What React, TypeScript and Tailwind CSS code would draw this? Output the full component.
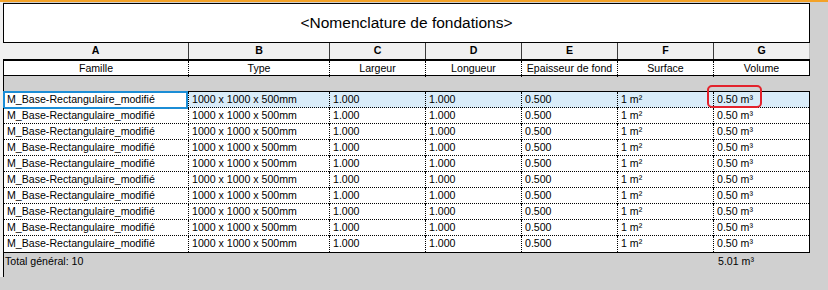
import React from 'react'

const letters = ['A', 'B', 'C', 'D', 'E', 'F', 'G']
const headers = ['Famille', 'Type', 'Largeur', 'Longueur', 'Epaisseur de fond', 'Surface', 'Volume']

const row = [
  'M_Base-Rectangulaire_modifié',
  '1000 x 1000 x 500mm',
  '1.000',
  '1.000',
  '0.500',
  '1 m²',
  '0.50 m³',
]

const rows = Array.from({ length: 10 }, () => row)

export default function App() {
  return (
    <div
      className="w-[828px] h-[290px] bg-[#d0d0d0] text-black overflow-hidden flex flex-col"
      style={{ fontFamily: '"Liberation Sans", Arial, sans-serif' }}
    >
      <div className="h-[2px] bg-[#f3a228]" />
      <div className="flex h-[275px]">
        <div className="w-[3px] bg-[#f0f0f0]" />
        <div className="w-[807px] pt-[1px] flex flex-col">
          {/* title */}
          <div className="h-[40px] border border-black bg-white flex items-center justify-center text-[15.5px]">
            &lt;Nomenclature de fondations&gt;
          </div>

          {/* column letters */}
          <div className="grid grid-cols-[185px_141px_96px_96px_96px_96px_96px] h-[16px] bg-[#f0f0f0] border-r border-[#bdbdbd]">
            {letters.map((l, i) => (
              <div
                key={l}
                className={`flex items-center justify-center text-[10.6px] font-bold ${i > 0 ? 'border-l border-[#3a3a3a]' : ''}`}
              >
                {l}
              </div>
            ))}
          </div>
          <div className="h-[2px] bg-black" />

          {/* header names */}
          <div className="grid grid-cols-[185px_141px_96px_96px_96px_96px_96px] h-[15px] bg-white border-r border-b border-black">
            {headers.map((h, i) => (
              <div
                key={h}
                className={`flex items-center justify-center text-[10.6px] whitespace-nowrap ${i > 0 ? 'border-l border-dotted border-black' : 'border-l border-black'}`}
              >
                {h}
              </div>
            ))}
          </div>

          {/* group row */}
          <div className="h-[15px] border-l border-black" />

          {/* data */}
          <div className="relative border-t border-b border-r border-black">
            {rows.map((r, ri) => (
              <div
                key={ri}
                className={`grid grid-cols-[185px_141px_96px_96px_96px_96px_96px] h-[16px] ${ri === 0 ? 'bg-[#d9ecf9]' : 'bg-white'} ${ri < rows.length - 1 ? 'border-b border-dotted border-black' : ''}`}
              >
                {r.map((c, ci) => (
                  <div
                    key={ci}
                    className={`relative flex items-center pl-[3px] text-[10.6px] whitespace-nowrap ${ci > 0 ? 'border-l border-dotted border-black' : 'border-l border-black'} ${ri === 0 && ci === 0 ? 'bg-white' : ''}`}
                  >
                    {c}
                    {ri === 0 && ci === 0 && (
                      <div className="absolute -left-[1px] -top-[1px] right-0 -bottom-[1px] border-2 border-[#1b8dd6]" />
                    )}
                  </div>
                ))}
              </div>
            ))}
            <div className="absolute left-[704px] -top-[7px] w-[55px] h-[23px] rounded-[5px] border-2 border-[#e3222c]" />
          </div>

          {/* totals */}
          <div className="grid grid-cols-[185px_141px_96px_96px_96px_96px_96px] flex-1 border-l border-black text-[10.6px]">
            <div className="col-span-6 pl-[1px] pt-[1px] h-[14px]">Total général: 10</div>
            <div className="pl-[4px] pt-[1px] h-[14px]">5.01 m³</div>
          </div>
        </div>
      </div>
    </div>
  )
}
